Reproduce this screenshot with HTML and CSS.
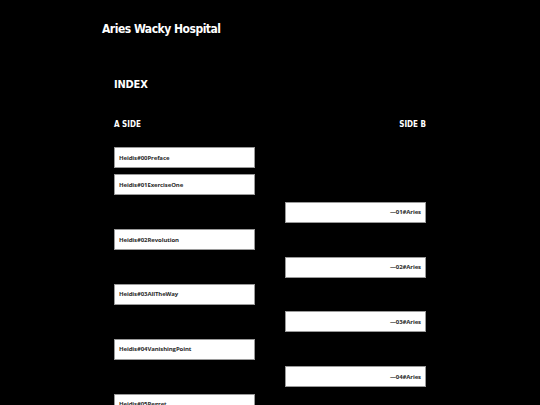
FILE: index.html
```html
<!DOCTYPE HTML>
<html>
<head>
  <title>Aries Wacky Hospital</title>
  <meta name="viewport" content="width=device-width, initial-scale=1">
  <link rel="stylesheet" href="styles.css">
</head>
<body>
  <div class="topnav">
    <h1>Aries Wacky Hospital</h1>
  </div>
  <div class="content">
    <h2>INDEX</h2>
    <div class="sides">
      <h3>A SIDE</h3>
      <h3>SIDE B</h3>
    </div>
    <div class="tracks">
      <a class="track side-a" href="#">Heidis#00Preface</a>
      <a class="track side-a" href="#">Heidis#01ExerciseOne</a>
      <a class="track side-b" href="#">&mdash;01#Aries</a>
      <a class="track side-a" href="#">Heidis#02Revolution</a>
      <a class="track side-b" href="#">&mdash;02#Aries</a>
      <a class="track side-a" href="#">Heidis#03AllTheWay</a>
      <a class="track side-b" href="#">&mdash;03#Aries</a>
      <a class="track side-a" href="#">Heidis#04VanishingPoint</a>
      <a class="track side-b" href="#">&mdash;04#Aries</a>
      <a class="track side-a" href="#">Heidis#05Regret</a>
      <a class="track side-b" href="#">&mdash;05#Aries</a>
    </div>
  </div>
</body>
</html>
```

FILE: styles.css
```css
html {
  font-family: "DejaVu Sans Condensed", "Liberation Sans", sans-serif;
  background-color: #000;
  color: #fff;
}
body {
  margin: 0;
  background-color: #000;
}
h1 {
  font-size: 12px;
  line-height: 16px;
  letter-spacing: -0.5px;
  font-weight: bold;
  margin: 0;
}
h2 {
  font-size: 11px;
  line-height: 14px;
  letter-spacing: -0.2px;
  font-weight: bold;
  margin: 0;
}
h3 {
  font-size: 8px;
  line-height: 10px;
  font-weight: bold;
  margin: 0;
}
.topnav {
  width: 336px;
  margin: 0 auto;
  padding-top: 21px;
}
.content {
  width: 312px;
  margin: 0 auto;
  padding-top: 41px;
}
.sides {
  display: flex;
  justify-content: space-between;
  margin-top: 28px;
}
.tracks {
  display: flex;
  flex-direction: column;
  gap: 6.4px;
  margin-top: 17px;
}
.track {
  box-sizing: border-box;
  width: 141px;
  height: 21px;
  padding: 0 4px;
  display: flex;
  align-items: center;
  background-color: #fff;
  border: 1px solid #9a9a9a;
  font-family: "Open Sans", sans-serif;
  font-size: 6px;
  letter-spacing: -0.1px;
  font-weight: bold;
  color: #2a2a2a;
  text-decoration: none;
}
.side-b {
  align-self: flex-end;
  justify-content: flex-end;
}
```
